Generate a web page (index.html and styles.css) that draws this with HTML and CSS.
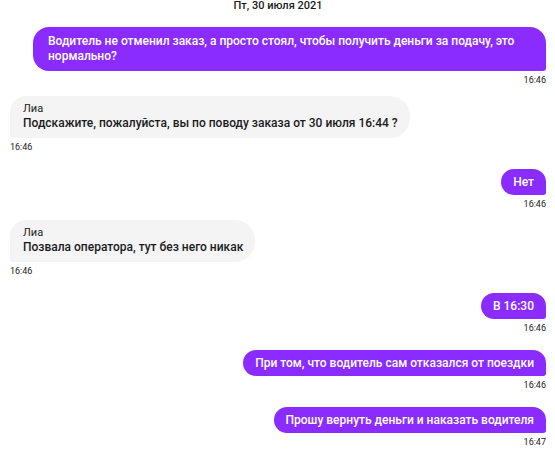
FILE: index.html
```html
<!DOCTYPE html>
<html lang="ru">
<head>
<meta charset="utf-8">
<link rel="stylesheet" href="styles.css">
</head>
<body>
<div class="chat">
  <div class="date">Пт, 30 июля 2021</div>

  <div class="msg out first">
    <div class="bubble">Водитель не отменил заказ, а просто стоял, чтобы получить деньги за подачу, это нормально?</div>
    <div class="time">16:46</div>
  </div>

  <div class="msg in">
    <div class="bubble">
      <div class="name">Лиа</div>
      <div class="text">Подскажите, пожалуйста, вы по поводу заказа от 30 июля 16:44 ?</div>
    </div>
    <div class="time">16:46</div>
  </div>

  <div class="msg out">
    <div class="bubble">Нет</div>
    <div class="time">16:46</div>
  </div>

  <div class="msg in">
    <div class="bubble">
      <div class="name">Лиа</div>
      <div class="text">Позвала оператора, тут без него никак</div>
    </div>
    <div class="time">16:46</div>
  </div>

  <div class="msg out">
    <div class="bubble">В 16:30</div>
    <div class="time">16:46</div>
  </div>

  <div class="msg out">
    <div class="bubble">При том, что водитель сам отказался от поездки</div>
    <div class="time">16:46</div>
  </div>

  <div class="msg out">
    <div class="bubble">Прошу вернуть деньги и наказать водителя</div>
    <div class="time">16:47</div>
  </div>
</div>
</body>
</html>
```

FILE: styles.css
```css
html, body {
  margin: 0;
  padding: 0;
  background: #ffffff;
}

body {
  font-family: Roboto, "Noto Sans", sans-serif;
  color: #1b1b1b;
}

.chat {
  display: flex;
  flex-direction: column;
  padding: 0 9px 0 10px;
}

.date {
  text-align: center;
  font-size: 11px;
  line-height: 12px;
  font-weight: 500;
  color: #1b1b1b;
}

.msg {
  display: flex;
  flex-direction: column;
  margin-top: 16px;
}

.msg.in {
  align-items: flex-start;
  margin-top: 10px;
}

.msg.out {
  align-items: flex-end;
}

.msg.out.first {
  margin-top: 15px;
}

.bubble {
  max-width: 513px;
  box-sizing: border-box;
  font-size: 12px;
  line-height: 15px;
  font-weight: 500;
}

.out .bubble {
  background: #8a2cff;
  color: #ffffff;
  padding: 6px 12px 5px 12px;
  border-radius: 14px 14px 3px 14px;
}

.first .bubble {
  padding: 7px 15px;
  border-radius: 16px 16px 3px 16px;
}

.in .bubble {
  background: #f4f4f5;
  color: #1b1b1b;
  padding: 6px 12px 7px 13px;
  border-radius: 16px 20px 20px 3px;
}

.name {
  font-size: 11px;
  line-height: 14px;
  font-weight: 400;
  color: #222222;
}

.time {
  margin-top: 4px;
  font-size: 9px;
  line-height: 11px;
  color: #222222;
}
```
